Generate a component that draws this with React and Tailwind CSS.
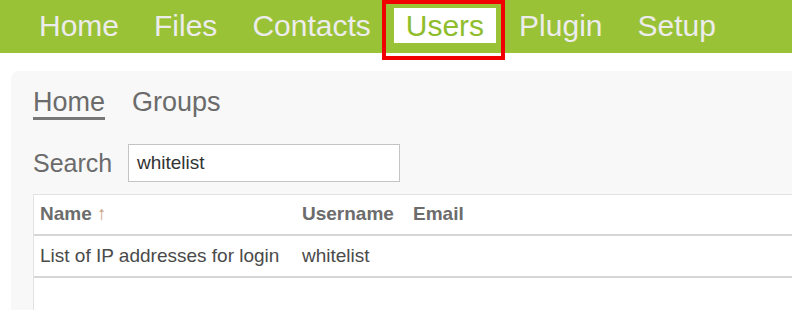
const NAV = ['Home', 'Files', 'Contacts', 'Users', 'Plugin', 'Setup'];

export default function App() {
  return (
    <div className="relative w-[792px] h-[310px] overflow-hidden bg-white font-['Liberation_Sans',Arial,sans-serif]">
      {/* top bar */}
      <nav className="h-[53px] bg-[#9ac236] flex items-start gap-[11px] pl-[27px] pt-[8px]">
        {NAV.map((item) => (
          <div
            key={item}
            className={`h-[35px] leading-[35px] px-3 text-[30px] ${
              item === 'Users' ? 'bg-white text-[#8fbd2c]' : 'text-[#ececec]'
            }`}
          >
            {item}
          </div>
        ))}
      </nav>

      {/* highlight */}
      <div className="absolute left-[382px] top-0 w-[123px] h-[60px] border-4 border-[#f00000]" />

      <div className="mt-[18px] ml-[11px] w-[900px] h-[300px] rounded-tl-[8px] bg-[#f8f8f8] pl-[22px] pt-[17px]">
        <div className="flex gap-[27px] text-[27px] text-[#6b6b6b]">
          <div className="h-[32px] leading-[29px] border-b-[3px] border-[#777]">Home</div>
          <div className="h-[29px] leading-[29px]">Groups</div>
        </div>

        <div className="flex items-center mt-[24px]">
          <span className="w-[95px] text-[25px] leading-[30px] text-[#6b6b6b]">Search</span>
          <div className="w-[272px] h-[38px] border border-[#c4c4c4] bg-white pl-[8px] flex items-center text-[19px] text-[#333]">
            whitelist
          </div>
        </div>

        <div className="mt-[12px] h-[200px] bg-white border-l border-t border-[#e2e2e2] text-[19px]">
          <div className="flex items-center h-[41px] border-b-2 border-[#d6d6d6] font-bold text-[#6c6c6c]">
            <div className="w-[262px] pl-[6px]">
              Name <span className="font-normal text-[#c9a184]">↑</span>
            </div>
            <div className="w-[111px] pl-[6px]">Username</div>
            <div className="pl-[6px]">Email</div>
          </div>
          <div className="flex items-center h-[42px] border-b-2 border-[#d6d6d6] text-[#4a4a4a]">
            <div className="w-[262px] pl-[6px]">List of IP addresses for login</div>
            <div className="w-[111px] pl-[6px]">whitelist</div>
            <div className="pl-[6px]" />
          </div>
        </div>
      </div>
    </div>
  );
}
